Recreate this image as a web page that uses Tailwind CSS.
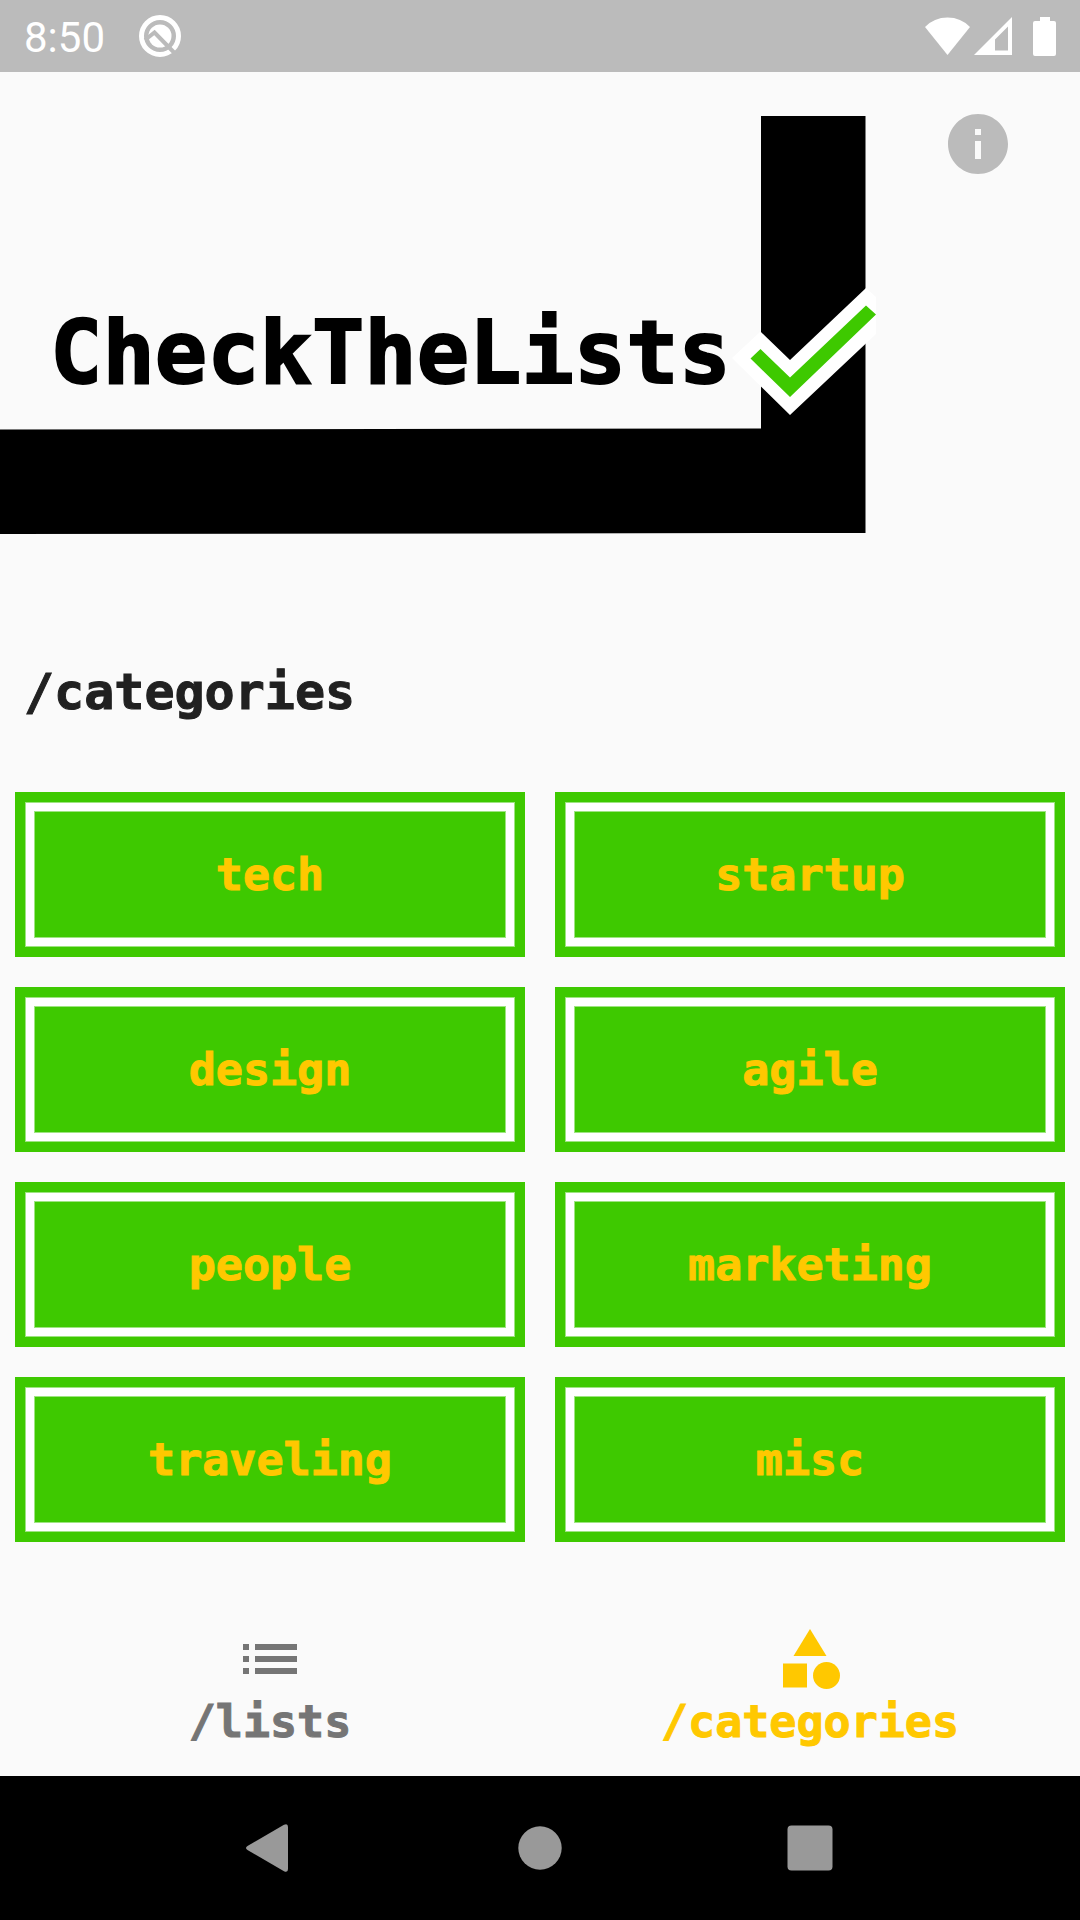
<!DOCTYPE html>
<html lang="en">
<head>
<meta charset="utf-8">
<meta name="viewport" content="width=device-width, initial-scale=1">
<title>CheckTheLists</title>
<script src="https://cdn.jsdelivr.net/npm/@tailwindcss/browser@4"></script>
</head>
<body class="flex min-h-screen flex-col bg-[#fafafa] font-['DejaVu_Sans_Mono',monospace] font-bold text-[#212121] [-webkit-text-stroke:1px]">

<!-- Status bar -->
<div class="flex h-18 items-center bg-[#bbbbbb] px-6 text-white [-webkit-text-stroke:0]">
  <span class="pt-1 font-['Roboto',sans-serif] text-[42px] leading-[48px] font-normal">8:50</span>
  <svg class="ml-[34px] h-[42px] w-[42px]" viewBox="0 0 42 42" fill="none" aria-hidden="true">
    <circle cx="21" cy="21" r="18.500" stroke="currentColor" stroke-width="5"/>
    <circle cx="21" cy="21" r="11.500" fill="currentColor"/>
    <path d="M6 25L15.500 17.500L37 39.500" stroke="#bbbbbb" stroke-width="4"/>
  </svg>
  <svg class="ml-auto h-[38px] w-[45px]" viewBox="0 0 45 38" fill="currentColor" aria-hidden="true"><path d="M0 10Q9 .5 22.500 .5T45 10L22.500 38z"/></svg>
  <svg class="ml-1 h-[38px] w-[38px]" viewBox="0 0 38 38" fill="currentColor" fill-rule="evenodd" aria-hidden="true"><path d="M38 0V38H0zM34 9.500L21 22.500V33.500H34z"/></svg>
  <svg class="ml-[21px] h-[39px] w-[23px]" viewBox="0 0 23 39" fill="currentColor" aria-hidden="true"><path d="M7 0h10v4h4q2 0 2 2v31q0 2-2 2H2q-2 0-2-2V6q0-2 2-2h5z"/></svg>
</div>

<header class="relative">
  <h1>
    <svg class="block w-full" viewBox="0 0 1080 480">
      <path d="M761 44H865.500V461L0 462V357.500L761 356.500z" fill="#000"/>
      <path d="M732 286L760.500 259.500L790 288L866 216L876 225V262L790 343z" fill="#fff"/>
      <path d="M750.500 286.500L760.500 277L790 305.500L866 233.500L876 242.500L790 325z" fill="#3ec900"/>
      <text x="50" y="311" font-size="87" fill="#000" stroke="#000" stroke-width="2">CheckTheLists</text>
    </svg>
  </h1>
  <button type="button" aria-label="Info" class="absolute top-9 right-[66px] text-[#bbbbbb]">
    <svg class="h-18 w-18" viewBox="0 0 24 24" fill="currentColor"><path d="M12 2C6.480 2 2 6.480 2 12s4.480 10 10 10 10-4.480 10-10S17.520 2 12 2zm1 15h-2v-6h2v6zm0-8h-2V7h2v2z"/></svg>
  </button>
</header>

<main class="flex-1">
  <h2 class="px-6 pt-[110px] text-[50px] leading-[60px]">/categories</h2>
  <div class="mt-[70px] grid grid-cols-2 gap-[30px] px-[15px] text-[45px] leading-[54px] text-[#ffc800]">
    <button type="button" class="flex h-[165px] bg-[#3ec900] p-[11px]"><span class="flex h-full w-full items-center justify-center border-8 border-white ring-1 ring-[#9ee480] inset-ring-1 inset-ring-[#9ee480]">tech</span></button>
    <button type="button" class="flex h-[165px] bg-[#3ec900] p-[11px]"><span class="flex h-full w-full items-center justify-center border-8 border-white ring-1 ring-[#9ee480] inset-ring-1 inset-ring-[#9ee480]">startup</span></button>
    <button type="button" class="flex h-[165px] bg-[#3ec900] p-[11px]"><span class="flex h-full w-full items-center justify-center border-8 border-white ring-1 ring-[#9ee480] inset-ring-1 inset-ring-[#9ee480]">design</span></button>
    <button type="button" class="flex h-[165px] bg-[#3ec900] p-[11px]"><span class="flex h-full w-full items-center justify-center border-8 border-white ring-1 ring-[#9ee480] inset-ring-1 inset-ring-[#9ee480]">agile</span></button>
    <button type="button" class="flex h-[165px] bg-[#3ec900] p-[11px]"><span class="flex h-full w-full items-center justify-center border-8 border-white ring-1 ring-[#9ee480] inset-ring-1 inset-ring-[#9ee480]">people</span></button>
    <button type="button" class="flex h-[165px] bg-[#3ec900] p-[11px]"><span class="flex h-full w-full items-center justify-center border-8 border-white ring-1 ring-[#9ee480] inset-ring-1 inset-ring-[#9ee480]">marketing</span></button>
    <button type="button" class="flex h-[165px] bg-[#3ec900] p-[11px]"><span class="flex h-full w-full items-center justify-center border-8 border-white ring-1 ring-[#9ee480] inset-ring-1 inset-ring-[#9ee480]">traveling</span></button>
    <button type="button" class="flex h-[165px] bg-[#3ec900] p-[11px]"><span class="flex h-full w-full items-center justify-center border-8 border-white ring-1 ring-[#9ee480] inset-ring-1 inset-ring-[#9ee480]">misc</span></button>
  </div>
</main>

<nav class="grid grid-cols-2 pt-6 pb-[27px] text-[45px] leading-[54px]">
  <a href="#lists" class="flex flex-col items-center text-[#757575]">
    <svg class="h-18 w-18" viewBox="0 0 24 24" fill="currentColor" aria-hidden="true"><path d="M3 13h2v-2H3v2zm0 4h2v-2H3v2zm0-8h2V7H3v2zm4 4h14v-2H7v2zm0 4h14v-2H7v2zM7 7v2h14V7H7z"/></svg>
    /lists
  </a>
  <a href="#categories" aria-current="page" class="flex flex-col items-center text-[#ffc800]">
    <svg class="h-18 w-18" viewBox="0 0 24 24" fill="currentColor" aria-hidden="true"><path d="M12 2l-5.500 9h11z"/><circle cx="17.500" cy="17.500" r="4.500"/><path d="M3 13.500h8v8H3z"/></svg>
    /categories
  </a>
</nav>

<!-- System navigation -->
<div class="grid h-36 grid-cols-3 place-items-center bg-black px-[12.5%] text-[#999999]">
  <button type="button" aria-label="Back"><svg class="h-12 w-12" viewBox="0 0 48 48" fill="currentColor"><path d="M1.500 22L38 .8Q42-1 42 3V45Q42 49 38 47.200L1.500 26Q-1.500 24 1.500 22z"/></svg></button>
  <button type="button" aria-label="Home"><svg class="h-11 w-11" viewBox="0 0 44 44" fill="currentColor"><circle cx="22" cy="22" r="21.700"/></svg></button>
  <button type="button" aria-label="Overview"><svg class="h-[46px] w-[46px]" viewBox="0 0 46 46" fill="currentColor"><rect x=".5" y=".5" width="45" height="45" rx="4"/></svg></button>
</div>
</body>
</html>
